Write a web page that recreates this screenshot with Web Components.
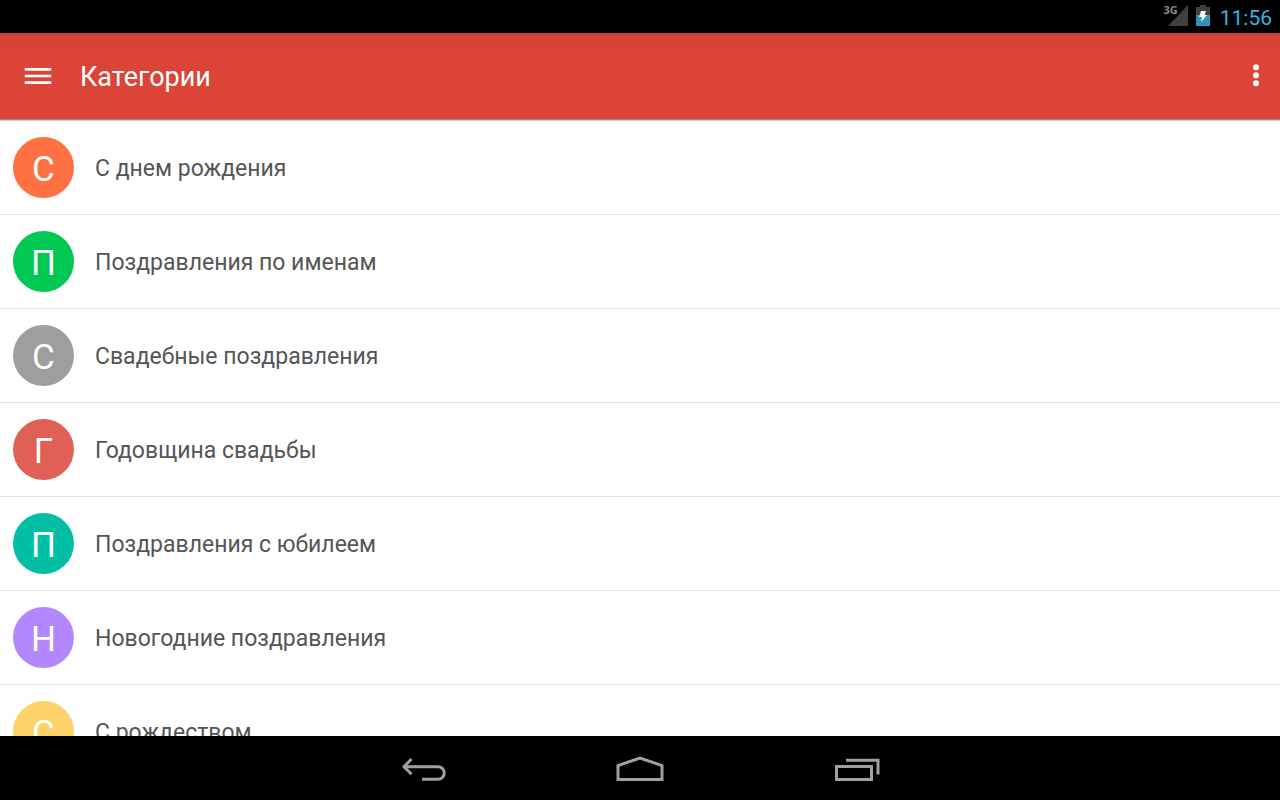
<!DOCTYPE html>
<html lang="ru">
<head>
<meta charset="utf-8">
<meta name="viewport" content="width=device-width, initial-scale=1">
<title>Категории</title>
<style>
  body {
    margin: 0;
    font-family: Roboto, "Noto Sans", sans-serif;
  }
</style>
</head>
<body>
<app-shell>
  <status-bar slot="status" time="11:56" network="3G"></status-bar>
  <app-bar slot="header">Категории</app-bar>
  <category-list>
    <category-item color="#ff7043" letter="С">С днем рождения</category-item>
    <category-item color="#00c853" letter="П">Поздравления по именам</category-item>
    <category-item color="#9e9e9e" letter="С">Свадебные поздравления</category-item>
    <category-item color="#e06055" letter="Г">Годовщина свадьбы</category-item>
    <category-item color="#00bfa5" letter="П">Поздравления с юбилеем</category-item>
    <category-item color="#b388ff" letter="Н">Новогодние поздравления</category-item>
    <category-item color="#fcd36a" letter="С">С рождеством</category-item>
  </category-list>
  <nav-bar slot="nav"></nav-bar>
</app-shell>

<script>
class BaseElement extends HTMLElement {
  constructor() {
    super();
    this.attachShadow({ mode: 'open' });
    this.shadowRoot.innerHTML = this.constructor.template;
  }
}

class AppShell extends BaseElement {
  static get template() {
    return `
      <style>
        :host {
          display: flex;
          flex-direction: column;
          height: 100vh;
          background: #fff;
        }

        main {
          flex: 1;
          min-height: 0;
          overflow: hidden;
        }
      </style>
      <slot name="status"></slot>
      <slot name="header"></slot>
      <main><slot></slot></main>
      <slot name="nav"></slot>
    `;
  }
}

class StatusBar extends BaseElement {
  static get template() {
    return `
      <style>
        :host {
          display: flex;
          justify-content: flex-end;
          align-items: flex-start;
          gap: 8px;
          height: 28px;
          padding: 5px 8px 0;
          background: #000;
          color: #33b5e5;
          font-size: 21px;
          line-height: 26px;
        }

        .signal {
          display: flex;
          align-items: flex-start;
        }

        .network {
          color: #8a8a8a;
          font: bold 11px/10px "Open Sans", sans-serif;
          margin-right: -10px;
        }

        svg {
          display: block;
        }

        time {
          margin-left: 2px;
        }
      </style>
      <span class="signal">
        <span class="network"></span>
        <svg width="20" height="22" viewBox="0 0 20 22" aria-hidden="true">
          <path d="M20 0v21H0z" fill="#404040"/>
        </svg>
      </span>
      <svg width="14" height="22" viewBox="0 0 14 22" aria-hidden="true">
        <path d="M4 0h6v2h4v8H0V2h4z" fill="#404040"/>
        <path d="M0 10h14v11H0z" fill="#3093bb"/>
        <path d="M5 6h5L8.500 10H11L5 17l1-5H3z" fill="#fff"/>
      </svg>
      <time></time>
    `;
  }

  connectedCallback() {
    this.shadowRoot.querySelector('.network').textContent = this.getAttribute('network');
    this.shadowRoot.querySelector('time').textContent = this.getAttribute('time');
  }
}

class AppBar extends BaseElement {
  static get template() {
    return `
      <style>
        :host {
          display: flex;
          align-items: center;
          height: 85px;
          background: linear-gradient(#c43c30, #d84236 3px, #db4437 28px);
          border-bottom: 1px solid #c65448;
          box-shadow: 0 1px #a58583, 0 2px #dccaca;
          margin-bottom: 2px;
          color: #fff;
        }

        h1 {
          flex: 1;
          margin: 0;
          padding-top: 2px;
          font-size: 27px;
          line-height: 32px;
          font-weight: 400;
        }

        button {
          display: flex;
          align-items: center;
          border: 0;
          padding: 0;
          height: 100%;
          background: transparent;
          color: inherit;
          cursor: pointer;
        }

        .menu {
          width: 80px;
          padding-left: 24px;
        }

        .more {
          width: 48px;
          justify-content: flex-end;
          padding-right: 20px;
        }
      </style>
      <button class="menu" type="button" aria-label="Меню">
        <svg width="28" height="18" viewBox="0 0 28 18" fill="none" stroke="currentColor" stroke-width="2.6">
          <path d="M.8 2.4h26.400M.8 9h26.400M.8 15.600h26.400"/>
        </svg>
      </button>
      <h1><slot></slot></h1>
      <button class="more" type="button" aria-label="Ещё">
        <svg width="8" height="24" viewBox="0 0 8 24" fill="currentColor">
          <circle cx="4" cy="3.2" r="3"/>
          <circle cx="4" cy="11.2" r="3"/>
          <circle cx="4" cy="19.2" r="3"/>
        </svg>
      </button>
    `;
  }
}

class CategoryList extends BaseElement {
  static get template() {
    return `
      <style>
        :host {
          display: block;
        }
      </style>
      <div role="list"><slot></slot></div>
    `;
  }
}

class CategoryItem extends BaseElement {
  static get template() {
    return `
      <style>
        :host {
          display: block;
          border-bottom: 1px solid #e2e2e2;
        }

        a {
          display: flex;
          align-items: center;
          gap: 21px;
          padding: 16px 13px;
          color: #555;
          font-size: 23px;
          line-height: 28px;
          text-decoration: none;
        }

        .avatar {
          flex: none;
          width: 61px;
          height: 61px;
          border-radius: 50%;
          background: var(--avatar-color);
          color: #fff;
          font-size: 35px;
          line-height: 65px;
          text-align: center;
        }

        .label {
          padding-top: 2px;
        }
      </style>
      <a href="#">
        <span class="avatar" aria-hidden="true"></span>
        <span class="label"><slot></slot></span>
      </a>
    `;
  }

  connectedCallback() {
    this.setAttribute('role', 'listitem');
    this.style.setProperty('--avatar-color', this.getAttribute('color'));
    this.shadowRoot.querySelector('.avatar').textContent = this.getAttribute('letter');
  }
}

class NavBar extends BaseElement {
  static get template() {
    return `
      <style>
        :host {
          display: flex;
          justify-content: center;
          height: 64px;
          background: #000;
        }

        button {
          display: flex;
          align-items: center;
          justify-content: center;
          width: 216px;
          border: 0;
          padding: 4px 0 0;
          background: transparent;
          color: #a0a0a0;
          cursor: pointer;
        }

        svg {
          fill: none;
          stroke: currentColor;
          stroke-width: 3;
        }
      </style>
      <button type="button" aria-label="Назад">
        <svg width="48" height="32" viewBox="0 0 48 32">
          <path d="M11.500 5L4 12.700l7.500 7.500M4 12.700h34a6.300 6.300 0 0 1 0 12.600H22"/>
        </svg>
      </button>
      <button type="button" aria-label="Домой">
        <svg width="48" height="32" viewBox="0 0 48 32">
          <path d="M2 25.500V11.500L24 4l22 7.500v14z"/>
        </svg>
      </button>
      <button type="button" aria-label="Недавние приложения">
        <svg width="48" height="32" viewBox="0 0 48 32">
          <path d="M4.500 12.500h35v13h-35zM14 6.200h32V20.500"/>
        </svg>
      </button>
    `;
  }
}

customElements.define('app-shell', AppShell);
customElements.define('status-bar', StatusBar);
customElements.define('app-bar', AppBar);
customElements.define('category-list', CategoryList);
customElements.define('category-item', CategoryItem);
customElements.define('nav-bar', NavBar);
</script>
</body>
</html>
